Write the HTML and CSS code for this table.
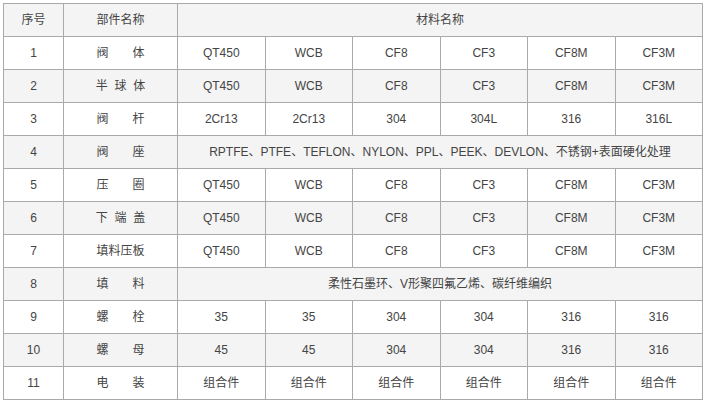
FILE: index.html
```html
<!DOCTYPE html>
<html lang="zh">
<head>
<meta charset="utf-8">
<link rel="stylesheet" href="styles.css">
</head>
<body>
<table class="spec">
  <colgroup>
    <col class="c-no"><col class="c-name">
    <col class="c-m"><col class="c-m"><col class="c-m"><col class="c-m"><col class="c-m"><col class="c-m">
  </colgroup>
  <tr class="alt"><td>序号</td><td>部件名称</td><td colspan="6">材料名称</td></tr>
  <tr><td>1</td><td>阀　　体</td><td>QT450</td><td>WCB</td><td>CF8</td><td>CF3</td><td>CF8M</td><td>CF3M</td></tr>
  <tr class="alt"><td>2</td><td>半&nbsp;&nbsp;球&nbsp;&nbsp;体</td><td>QT450</td><td>WCB</td><td>CF8</td><td>CF3</td><td>CF8M</td><td>CF3M</td></tr>
  <tr><td>3</td><td>阀　　杆</td><td>2Cr13</td><td>2Cr13</td><td>304</td><td>304L</td><td>316</td><td>316L</td></tr>
  <tr class="alt"><td>4</td><td>阀　　座</td><td colspan="6">RPTFE、PTFE、TEFLON、NYLON、PPL、PEEK、DEVLON、不锈钢+表面硬化处理</td></tr>
  <tr><td>5</td><td>压　　圈</td><td>QT450</td><td>WCB</td><td>CF8</td><td>CF3</td><td>CF8M</td><td>CF3M</td></tr>
  <tr class="alt"><td>6</td><td>下&nbsp;&nbsp;端&nbsp;&nbsp;盖</td><td>QT450</td><td>WCB</td><td>CF8</td><td>CF3</td><td>CF8M</td><td>CF3M</td></tr>
  <tr><td>7</td><td>填料压板</td><td>QT450</td><td>WCB</td><td>CF8</td><td>CF3</td><td>CF8M</td><td>CF3M</td></tr>
  <tr class="alt"><td>8</td><td>填　　料</td><td colspan="6">柔性石墨环、V形聚四氟乙烯、碳纤维编织</td></tr>
  <tr><td>9</td><td>螺　　栓</td><td>35</td><td>35</td><td>304</td><td>304</td><td>316</td><td>316</td></tr>
  <tr class="alt"><td>10</td><td>螺　　母</td><td>45</td><td>45</td><td>304</td><td>304</td><td>316</td><td>316</td></tr>
  <tr><td>11</td><td>电　　装</td><td>组合件</td><td>组合件</td><td>组合件</td><td>组合件</td><td>组合件</td><td>组合件</td></tr>
</table>
</body>
</html>
```
FILE: styles.css
```css
html, body {
  margin: 0;
  padding: 0;
  background: #ffffff;
}
body {
  padding: 3px;
  font-family: "Liberation Sans", Arial, "Noto Sans CJK SC", sans-serif;
  font-size: 12px;
  color: #444444;
}
.spec {
  width: 700px;
  table-layout: fixed;
  border-collapse: collapse;
  border: 1px solid #aaaaaa;
}
.c-no { width: 60px; }
.c-name { width: 114px; }
.spec td {
  height: 32px;
  padding: 0;
  border: 1px solid #aaaaaa;
  text-align: center;
  vertical-align: middle;
  line-height: 16px;
  white-space: nowrap;
}
.spec tr.alt td {
  background: #f4f4f4;
}
```
